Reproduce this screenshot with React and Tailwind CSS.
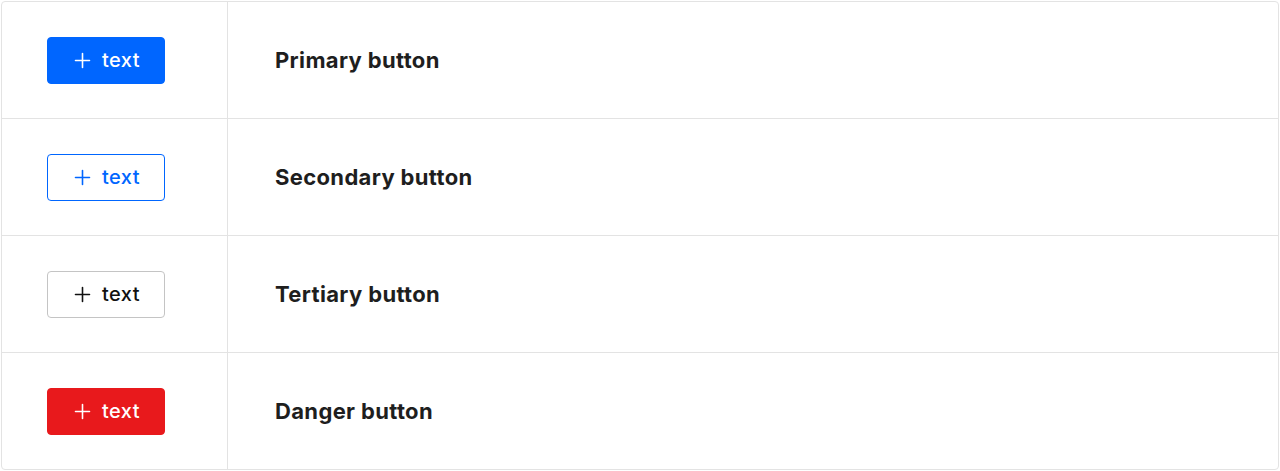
const PlusIcon = () => (
    <svg width="17" height="17" viewBox="0 0 17 17" fill="none" stroke="currentColor" strokeWidth="1.6" strokeLinecap="round">
        <path d="M8.5 1.5v14M1.5 8.5h14" />
    </svg>
);

const variants = {
    primary: "bg-[#0066ff] border-[#0066ff] text-white",
    secondary: "bg-white border-[#0066ff] text-[#0066ff]",
    tertiary: "bg-white border-[#c4c4c4] text-[#111111]",
    danger: "bg-[#e8191c] border-[#e8191c] text-white",
};

const rows = [
    { variant: "primary", label: "Primary button" },
    { variant: "secondary", label: "Secondary button" },
    { variant: "tertiary", label: "Tertiary button" },
    { variant: "danger", label: "Danger button" },
];

const Button = ({ variant }) => (
    <button
        className={`w-[118px] h-[47px] border rounded-[4px] flex items-center justify-center gap-[11px] pl-[2px] text-[20px] font-medium ${variants[variant]}`}
    >
        <PlusIcon />
        <span className="leading-none pb-[1px] tracking-[0.4px]">text</span>
    </button>
);

export default function App() {
    return (
        <div className="w-[1280px] h-[471px] p-px bg-white font-['Inter',sans-serif]">
            <div className="h-full border border-[#e3e3e3] rounded-[4px] overflow-hidden flex flex-col">
                {rows.map((row, i) => (
                    <div
                        key={row.variant}
                        className={`flex flex-1 ${i < rows.length - 1 ? "border-b border-[#e3e3e3]" : ""}`}
                    >
                        {/* Button column */}
                        <div className="w-[226px] border-r border-[#e3e3e3] flex items-center pl-[45px]">
                            <Button variant={row.variant} />
                        </div>
                        {/* Label */}
                        <div className="flex items-center pl-[47px] pt-px">
                            <p className="text-[22px] font-bold text-[#1e1e1e] tracking-[0.35px]">{row.label}</p>
                        </div>
                    </div>
                ))}
            </div>
        </div>
    );
}
